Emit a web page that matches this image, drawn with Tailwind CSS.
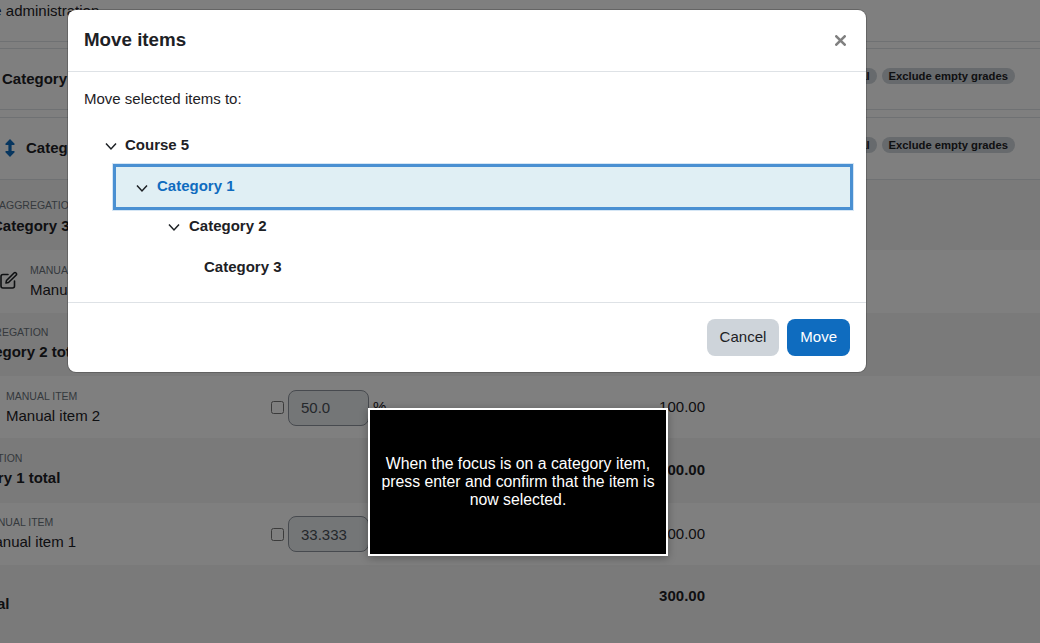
<!DOCTYPE html>
<html lang="en">
<head>
    <meta charset="UTF-8">
    <title>Move items</title>
    <script src="https://cdn.jsdelivr.net/npm/@tailwindcss/browser@4"></script>
</head>
<body class="relative h-[643px] w-[1040px] overflow-hidden bg-white font-['Liberation_Sans',sans-serif] text-[15px] leading-[22.5px] text-[#1d2125]">
    <!-- Gradebook behind the dialog -->
    <div class="h-[42px] border-b border-[#dee2e6]">
        <div class="ml-[-40px] leading-[22px]">Grade administration</div>
    </div>
    <div class="h-[6px]"></div>
    <div class="flex h-[62px] items-center justify-between border-y border-[#dee2e6] pr-[25px]">
        <span class="ml-[2px] font-bold">Category 2</span>
        <div class="mb-[6px] flex gap-[5px]">
            <span class="rounded-full bg-[#ced4da] px-[7px] text-[11.25px] font-bold leading-[16px]">Natural</span>
            <span class="rounded-full bg-[#ced4da] px-[7px] text-[11.25px] font-bold leading-[16px]">Exclude empty grades</span>
        </div>
    </div>
    <div class="h-[7px]"></div>
    <div class="flex h-[63px] items-center justify-between border-y border-[#dee2e6] pr-[25px]">
        <div class="flex items-center">
            <svg class="mb-[2px] ml-[5px] h-[18px] w-[10px]" viewBox="0 0 10 18" fill="#0f6cbf"><path d="M5 0 L9.6 4.8 Q10 5.8 9 6 L6.6 6 L6.6 12 L9 12 Q10 12.2 9.6 13.2 L5 18 L.4 13.2 Q0 12.2 1 12 L3.4 12 L3.4 6 L1 6 Q0 5.8 .4 4.8 Z"/></svg>
            <span class="ml-[11px] font-bold">Category 1</span>
        </div>
        <div class="mb-[8px] flex gap-[5px]">
            <span class="rounded-full bg-[#ced4da] px-[7px] text-[11.25px] font-bold leading-[16px]">Natural</span>
            <span class="rounded-full bg-[#ced4da] px-[7px] text-[11.25px] font-bold leading-[16px]">Exclude empty grades</span>
        </div>
    </div>

    <div class="flex h-[70px] items-center bg-[#f5f5f5] pt-[4px]">
        <div class="w-[271px] shrink-0">
            <div class="ml-[-1px] text-[10.5px] leading-[18px] text-[#6a737b]">AGGREGATION</div>
            <div class="ml-[-8px] mt-[1px] font-bold">Category 3 total</div>
        </div>
        <div class="w-[434px] text-right font-bold">100.00</div>
    </div>
    <div class="flex h-[63px] items-center">
        <div class="flex w-[271px] shrink-0 items-center">
            <svg class="mb-[4px] h-[18px] w-[18px] shrink-0" viewBox="0 0 18 18" fill="none" stroke="#1d2125" stroke-width="1.6" stroke-linecap="round" stroke-linejoin="round"><path d="M8 3.5 H3 Q1 3.5 1 5.5 V15 Q1 17 3 17 H12.5 Q14.5 17 14.5 15 V10"/><path d="M6.5 9.5 L14 2 Q15 1 16 2 Q17.2 3.2 16 4.2 L8.5 11.5 L6 12 Z"/></svg>
            <div class="ml-[12px]">
                <div class="text-[10.5px] leading-[18px] text-[#6a737b]">MANUAL ITEM</div>
                <div>Manual item 3</div>
            </div>
        </div>
        <div class="w-[434px] text-right">100.00</div>
    </div>
    <div class="flex h-[63px] items-center bg-[#f5f5f5]">
        <div class="mb-[2px] w-[271px] shrink-0">
            <div class="ml-[-29px] text-[10.5px] leading-[18px] text-[#6a737b]">AGGREGATION</div>
            <div class="ml-[-30px] font-bold">Category 2 total</div>
        </div>
        <div class="w-[434px] text-right font-bold">200.00</div>
    </div>
    <div class="flex h-[62px] items-center">
        <div class="w-[271px] shrink-0 pl-[6px]">
            <div class="text-[10.5px] leading-[18px] text-[#6a737b]">MANUAL ITEM</div>
            <div>Manual item 2</div>
        </div>
        <div class="mt-[1px] flex w-[434px] items-center">
            <input type="checkbox" class="h-[13px] w-[13px]">
            <input value="50.0" class="ml-[4px] h-[36px] w-[81px] rounded-[8px] border border-[#8f959e] bg-[#e9ecef] px-[12px] text-[#495057]">
            <span class="ml-[4px]">%</span>
            <span class="ml-auto">100.00</span>
        </div>
    </div>
    <div class="flex h-[65px] items-center bg-[#f5f5f5]">
        <div class="mb-[2px] w-[271px] shrink-0">
            <div class="ml-[-55px] text-[10.5px] leading-[18px] text-[#6a737b]">AGGREGATION</div>
            <div class="ml-[-53px] font-bold">Category 1 total</div>
        </div>
        <div class="w-[434px] text-right font-bold">300.00</div>
    </div>
    <div class="flex h-[62px] items-center">
        <div class="w-[271px] shrink-0">
            <div class="ml-[-18px] text-[10.5px] leading-[18px] text-[#6a737b]">MANUAL ITEM</div>
            <div class="ml-[-18px] mb-[1px]">Manual item 1</div>
        </div>
        <div class="flex w-[434px] items-center">
            <input type="checkbox" class="h-[13px] w-[13px]">
            <input value="33.333" class="ml-[4px] h-[36px] w-[81px] rounded-[8px] border border-[#8f959e] bg-[#e9ecef] px-[12px] text-[#495057]">
            <span class="ml-[4px]">%</span>
            <span class="ml-auto">100.00</span>
        </div>
    </div>
    <div class="flex h-[78px] items-start bg-[#f5f5f5] pt-[20px]">
        <div class="mt-[8px] w-[271px] shrink-0">
            <div class="ml-[-78px] font-bold">Course total</div>
        </div>
        <div class="w-[434px] text-right font-bold">300.00</div>
    </div>

    <!-- Backdrop -->
    <div class="absolute inset-0 bg-black/50"></div>

    <!-- Dialog -->
    <div class="absolute left-[68px] top-[10px] flex h-[362px] w-[798px] flex-col rounded-[8px] bg-white shadow-[0_0_0_1px_rgba(0,0,0,0.2)]">
        <div class="flex h-[62px] shrink-0 items-center justify-between border-b border-[#dee2e6] pl-[16px] pr-[20px]">
            <h5 class="text-[18.75px] font-bold">Move items</h5>
            <svg class="h-[11px] w-[11px]" viewBox="0 0 11 11" stroke="#808080" stroke-width="2.6" stroke-linecap="round"><path d="M1.3 1.3 L9.7 9.7 M9.7 1.3 L1.3 9.7"/></svg>
        </div>
        <div class="flex-1 px-[16px] pt-[16px]">
            <p>Move selected items to:</p>
            <div class="mt-[16px] font-bold">
                <div class="flex h-[37.5px] items-center pl-[21px]">
                    <svg class="mt-[3px] h-[9px] w-[12px]" viewBox="0 0 12 9" fill="none" stroke="#1d2125" stroke-width="1.5"><path d="M1 1.5 L6 7 L11 1.5"/></svg>
                    <span class="ml-[8px]">Course 5</span>
                </div>
                <div class="ml-[29px] mr-[-3px] flex h-[46px] items-center border-[3px] border-[#4a90d2] bg-[#e0eff4] pb-[1px] pl-[20px] text-[#0f6cbf] outline outline-1 outline-[#d5e6f5]">
                    <svg class="mt-[3px] h-[9px] w-[12px]" viewBox="0 0 12 9" fill="none" stroke="#1d2125" stroke-width="1.5"><path d="M1 1.5 L6 7 L11 1.5"/></svg>
                    <span class="ml-[9px]">Category 1</span>
                </div>
                <div class="flex h-[32px] items-center pl-[84px]">
                    <svg class="mt-[3px] h-[9px] w-[12px]" viewBox="0 0 12 9" fill="none" stroke="#1d2125" stroke-width="1.5"><path d="M1 1.5 L6 7 L11 1.5"/></svg>
                    <span class="ml-[9px]">Category 2</span>
                </div>
                <div class="flex h-[50px] items-center pl-[120px]">Category 3</div>
            </div>
        </div>
        <div class="flex h-[70px] shrink-0 items-center justify-end gap-[8px] border-t border-[#dee2e6] pr-[16px]">
            <button class="h-[37px] rounded-[8px] bg-[#ced4da] px-[13px]">Cancel</button>
            <button class="h-[37px] rounded-[8px] bg-[#0f6cbf] px-[13px] text-white">Move</button>
        </div>
    </div>

    <!-- Tour step -->
    <div class="absolute left-[368px] top-[408px] flex h-[148px] w-[300px] items-center justify-center border-2 border-white bg-black px-[4px] text-center text-[15.8px] leading-[18px] text-white shadow-[0_2px_8px_rgba(0,0,0,0.3)]">
        When the focus is on a category item, press enter and confirm that the item is now selected.
    </div>
</body>
</html>
